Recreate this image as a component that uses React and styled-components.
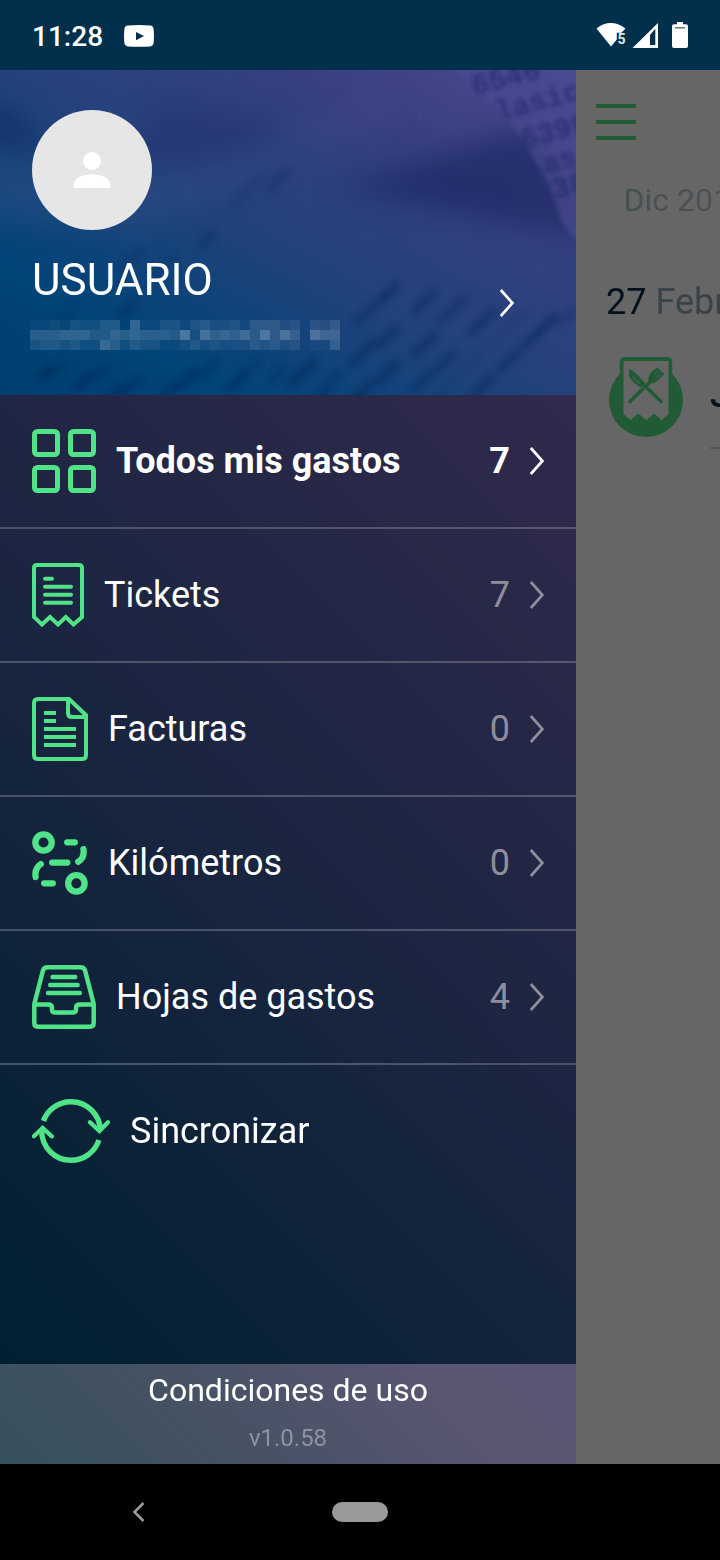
import React from "react";
import styled, { createGlobalStyle } from "styled-components";

const GREEN = "#50e387";
const DIM_GREEN = "#205b36";

const GlobalStyle = createGlobalStyle`
  * { box-sizing: border-box; }
  body { margin: 0; background: #000; font-family: Roboto, "Liberation Sans", sans-serif; }
  svg { display: block; flex: none; }
`;

const Screen = styled.div`
  width: 720px;
  height: 1560px;
  display: flex;
  flex-direction: column;
  overflow: hidden;
`;

const StatusBar = styled.header`
  height: 70px;
  flex: none;
  display: flex;
  align-items: center;
  padding: 2px 32px 0;
  background: #00304b;
  color: #fff;
`;

const Clock = styled.span`
  font-size: 28px;
  font-weight: 500;
  line-height: 34px;
  width: 92px;
  padding-top: 1px;
`;

const StatusIcons = styled.div`
  margin-left: auto;
  display: flex;
`;

const Body = styled.div`
  height: 1394px;
  flex: none;
  display: flex;
`;

const Drawer = styled.aside`
  width: 576px;
  flex: none;
  display: flex;
  flex-direction: column;
`;

const Profile = styled.section`
  height: 325px;
  flex: none;
  display: grid;
  background: linear-gradient(to top right, #003e70 0%, #004478 20%, #23427c 48%, #38407f 75%, #4c4a91 100%);
  overflow: hidden;
  > * { grid-area: 1 / 1; }
`;

const ProfileContent = styled.div`
  z-index: 1;
  display: flex;
  justify-content: space-between;
  padding: 40px 62px 0 32px;
`;

const ProfileArrow = styled.div`
  padding-top: 179px;
`;

const Avatar = styled.div`
  width: 120px;
  height: 120px;
  border-radius: 50%;
  background: #e6e6e6;
  display: flex;
  align-items: center;
  justify-content: center;
`;

const UserName = styled.div`
  margin-top: 23px;
  height: 51px;
  line-height: 54px;
  font-size: 44px;
  color: #fff;
`;

const Redacted = styled.div`
  margin: 16px 0 0 -2px;
  width: 310px;
  display: grid;
  grid-template-columns: repeat(31, 10px);
  grid-auto-rows: 10px;
`;

const Pixel = styled.i`
  background: rgba(190, 205, 225, ${(p) => p.$level * 0.041});
`;

const Menu = styled.nav`
  flex: 1;
  background: linear-gradient(45deg, #012031 0%, #1a2540 50%, #312a4c 100%);
`;

const MenuRow = styled.div`
  height: 134px;
  display: flex;
  align-items: center;
  gap: 20px;
  padding: 0 32px;
  border-bottom: 2px solid ${(p) => (p.$last ? "transparent" : "rgba(255,255,255,0.22)")};
  font-size: 36px;
  font-weight: ${(p) => (p.$active ? 700 : 400)};
  color: #fff;
`;

const Label = styled.span`
  flex: 1;
  white-space: nowrap;
`;

const Count = styled.span`
  color: ${(p) => (p.$active ? "#fff" : "#8f8e9c")};
`;

const Footer = styled.footer`
  height: 100px;
  flex: none;
  display: flex;
  flex-direction: column;
  align-items: center;
  background: linear-gradient(45deg, #36505c 0%, #475265 40%, #5a5672 76%, #5b5673 100%);
`;

const Terms = styled.div`
  margin-top: 6px;
  font-size: 32px;
  line-height: 40px;
  color: #fff;
`;

const Version = styled.div`
  margin-top: 13px;
  font-size: 24px;
  line-height: 30px;
  color: #8d93a0;
`;

const Page = styled.main`
  flex: 1;
  min-width: 0;
  overflow: hidden;
  background: #666;
  white-space: nowrap;
`;

const Hamburger = styled.div`
  margin: 34px 0 0 20px;
  width: 40px;
  display: grid;
  gap: 12px;
`;

const Bar = styled.span`
  height: 4px;
  background: ${DIM_GREEN};
`;

const Month = styled.div`
  margin: 41px 0 0 47.5px;
  font-size: 32px;
  line-height: 38px;
  color: #495155;
`;

const DateLine = styled.div`
  margin: 61px 0 0 30px;
  font-size: 36px;
  line-height: 44px;
  color: #38444a;
  b { font-weight: 400; color: #00131d; }
`;

const Expense = styled.div`
  display: flex;
  gap: 27px;
  padding: 33px 0 0 33px;
`;

const ExpenseText = styled.div`
  width: 300px;
  flex: none;
  height: 92px;
  padding-top: 16px;
  border-bottom: 2px solid #555;
  font-size: 36px;
  line-height: 44px;
  font-weight: 500;
  color: #00131d;
`;

const NavBar = styled.footer`
  height: 96px;
  flex: none;
  display: grid;
  grid-template-columns: 132px 200px 56px;
  align-items: center;
  background: #000;
`;

const BackSlot = styled.div`
  grid-column: 2;
`;

const HomePill = styled.div`
  height: 20px;
  border-radius: 10px;
  background: #999;
`;

const Chevron = ({ color = "#fff" }) => (
  <svg width="14" height="28" viewBox="0 0 14 28" fill="none" stroke={color} strokeWidth="2.7">
    <path d="M.8 1 12.4 14 .8 27" />
  </svg>
);

const GridIcon = () => (
  <svg width="64" height="64" fill="none" stroke={GREEN} strokeWidth="5">
    {[2.5, 38.5].map((y) =>
      [2.5, 38.5].map((x) => <rect key={`${x}-${y}`} x={x} y={y} width="23" height="23" rx="3" />)
    )}
  </svg>
);

const TicketIcon = () => (
  <svg width="52" height="64" fill="none" stroke={GREEN} strokeWidth="4">
    <path d="M2 54V5Q2 2 5 2H47Q50 2 50 5V54L41.5 61.5 33.8 54 26 61.5 18 54 10 61.5Z" strokeLinejoin="miter" />
    <path d="M13 15.7H20M13 23.7H39M13 31.7H39M13 39.7H39" strokeLinecap="round" />
  </svg>
);

const InvoiceIcon = () => (
  <svg width="56" height="64" fill="none" stroke={GREEN} strokeWidth="4">
    <path d="M37 2H6Q2 2 2 6V58Q2 62 6 62H50Q54 62 54 58V18.2Z" />
    <path d="M36 2V16Q36 20 40 20H54M12 16H24M12 24H24M12 32H44M12 40H44M12 48H44" />
  </svg>
);

const RouteIcon = () => (
  <svg width="56" height="64" fill="none" stroke={GREEN} strokeWidth="6.3" strokeLinecap="round">
    <circle cx="11.5" cy="11.5" r="8.2" />
    <circle cx="44.4" cy="52.4" r="8.2" />
    <path d="M35.2 11.3H42.8M20.2 31.6H35.3M12.2 52.3H20.8" />
    <path d="M51.4 18C52.4 24 50.8 28 46.2 30.7M8.8 33C4 36.4 2.8 40.6 3.6 46" />
  </svg>
);

const TrayIcon = () => (
  <svg width="64" height="64" fill="none" stroke={GREEN} strokeWidth="4.5">
    <path d="M2.3 39 10.8 6Q11.8 2.3 15.6 2.3H48.4Q52.2 2.3 53.2 6L61.7 39V58Q61.7 61.7 58 61.7H6Q2.3 61.7 2.3 58Z" />
    <path d="M2.3 39.4H16.5Q20 39.4 20 43V44.5Q20 47.6 23.5 47.6H40.5Q44 47.6 44 44.5V43Q44 39.4 47.5 39.4H61.7" />
    <path d="M20.6 12H43.2M18.2 20H45.6M16 28H47.8" strokeLinecap="round" />
  </svg>
);

const SyncIcon = () => (
  <svg width="78" height="64" fill="none" stroke={GREEN} strokeWidth="5.4">
    <path d="M11.4 22A29.3 29.3 0 0 1 39 2.7 29.3 29.3 0 0 1 68.3 32M66.9 41A29.3 29.3 0 0 1 39 61.3 29.3 29.3 0 0 1 9.7 32" />
    <path d="M58 23.2 67.4 32 76 23.2M1.9 37.3 10.6 29 19.8 37.3" strokeWidth="4.3" strokeLinecap="round" />
  </svg>
);

const PersonIcon = () => (
  <svg width="36" height="38" fill="#fff">
    <circle cx="18" cy="10" r="9" />
    <path d="M0 37V31.5C1 26 10 23.5 18 23.5S35 26 36 31.5V37Z" />
  </svg>
);

const VideoIcon = () => (
  <svg width="30" height="22" viewBox="0 0 30 22">
    <path d="M4 .6Q15-.5 26 .6 29.3 1 29.6 4 30.3 11 29.6 18 29.3 21 26 21.4 15 22.3 4 21.4.7 21 .4 18-.3 11 .4 4 .7 1 4 .6Z" fill="#fff" />
    <path d="M12 7 20 11 12 15.2Z" fill="#00304b" />
  </svg>
);

const SignalIcons = () => (
  <svg width="92" height="28" fill="#fff">
    <path d="M.5 6.4Q14.5-4.4 29.5 6.4L25.4 10.8H20.8V17.6L15 24.6Z" />
    <text x="21.6" y="22.3" fontSize="14" fontWeight="700" fill="#dfe6ea">5</text>
    <path d="M62 1V26H36.5ZM59.3 6.8 54 13V23H59.3Z" fillRule="evenodd" />
    <path d="M81 0H87V2.2H90Q92 2.2 92 4V24Q92 26 90 26H78Q76 26 76 24V4Q76 2.2 78 2.2H81Z" />
    <path d="M79 5H89V6.6H79Z" fill="#00304b" opacity=".6" />
  </svg>
);

const MealBadge = () => (
  <svg width="74" height="82" fill="none" stroke={DIM_GREEN}>
    <circle cx="37" cy="43" r="37" fill={DIM_GREEN} stroke="none" />
    <path d="M12.8 58V5Q12.8 2 15.8 2H58.2Q61.2 2 61.2 5V58" strokeWidth="4" />
    <path d="M14.5 4H59.5V57L52.5 63.3 46.8 57.8Q45 56 43.2 57.8L37.3 63.3 31 57.8Q29 56 27.2 57.8L21.5 63.3 14.5 57Z" fill="#666" stroke="none" />
    <path d="M21 44.5 40 26M52 44.5 34 27" strokeWidth="3.6" strokeLinecap="round" />
    <path d="M21.3 13.2Q25 15.5 34.6 26L31.5 29.2Q21 22.5 20.6 17.5Z" fill={DIM_GREEN} strokeWidth="2" strokeLinejoin="round" />
    <path d="M23.4 19Q27 24 30.6 26.4" stroke="#666" strokeWidth="1" />
    <path d="M40 26Q39 19.5 42.5 15.5L48 11 51 14 54 17 49 22.5Q46 26.5 40 26Z" fill={DIM_GREEN} strokeWidth="1" />
    <path d="M44 17 48.3 11.8M47 20 51.2 14.6M48 22 53.8 16.8" strokeWidth="2.6" strokeLinecap="round" />
    <path d="M45.4 18.2 49.6 13.8M47.9 20.5 52 16.6" stroke="#666" strokeWidth=".7" />
  </svg>
);

/* Smudges of print on the paper: x, y, length, opacity. */
const INK = [
  [130, 190, 28, 0.2], [207, 170, 16, 0.4], [250, 118, 40, 0.2], [278, 110, 22, 0.3],
  [128, 239, 18, 0.45], [65, 245, 24, 0.2], [165, 195, 24, 0.2],
  [46, 303, 14, 0.55], [60, 298, 8, 0.3], [84, 311, 18, 0.6], [100, 303, 14, 0.4],
  [112, 325, 18, 0.5], [130, 316, 20, 0.5], [168, 322, 20, 0.5], [188, 309, 22, 0.55],
  [208, 299, 18, 0.4], [237, 311, 20, 0.55], [252, 297, 14, 0.3], [278, 304, 16, 0.35],
  [303, 302, 30, 0.6], [333, 310, 16, 0.35], [362, 322, 26, 0.6], [322, 324, 14, 0.4],
  [372, 238, 38, 0.45], [391, 221, 16, 0.55], [363, 283, 30, 0.5], [388, 267, 22, 0.5],
  [388, 302, 26, 0.6], [424, 232, 26, 0.5], [424, 275, 26, 0.6], [452, 240, 32, 0.4],
  [422, 312, 24, 0.45], [446, 291, 22, 0.5], [482, 252, 30, 0.55],
  [484, 315, 24, 0.6], [510, 290, 24, 0.55], [540, 261, 40, 0.6], [567, 247, 14, 0.3],
];

const PaperTexture = () => (
  <svg width="576" height="325" viewBox="0 0 576 325">
    <defs>
      <filter id="wide" x="-30%" y="-50%" width="160%" height="200%" colorInterpolationFilters="sRGB"><feGaussianBlur stdDeviation="14" /></filter>
      <filter id="ink" x="-20%" y="-20%" width="140%" height="140%" colorInterpolationFilters="sRGB"><feGaussianBlur stdDeviation="3.6" /></filter>
      <filter id="print" x="-20%" y="-20%" width="140%" height="140%" colorInterpolationFilters="sRGB"><feGaussianBlur stdDeviation="2.2" /></filter>
    </defs>
    <g filter="url(#wide)">
      <path d="M-30 25 20 45 45 80-30 70Z" fill="#122c64" opacity=".7" />
      <path d="M120 90 165 30 290 50 240 85 180 100Z" fill="#232e6d" opacity=".45" />
      <path d="M-20 90 150 110 270 85 330 65 140 160-20 150Z" fill="#3a5590" opacity=".3" />
      <path d="M335 118 460 80 530 55 590 165 490 150Z" fill="#17245f" opacity=".6" />
      <path d="M325 65 395 35 385 20 290 70Z" fill="#5450a0" opacity=".35" />
      <path d="M400 160 480 170 590 185 590 220 450 200Z" fill="#33407f" opacity=".4" />
    </g>
    <path d="M448-4C480 20 503 42 519 66 543 98 555 126 561 150Q565 160 580 172V-4Z" fill="#4a4b93" opacity=".65" filter="url(#print)" />
    <g filter="url(#ink)" stroke="#042557" strokeWidth="8" strokeLinecap="round" opacity=".85">
      {INK.map(([x, y, len, o]) => (
        <path key={`${x}-${y}`} d={`M${x - len * 0.36} ${y + len * 0.34}L${x + len * 0.36} ${y - len * 0.34}`} opacity={o} />
      ))}
      <path d="M438 325 525 243" strokeWidth="1.5" opacity=".5" />
    </g>
    <g filter="url(#print)" fill="#222a6c" fontFamily="Liberation Mono" fontWeight="700" fontSize="29" opacity=".72">
      <text transform="translate(474 25) rotate(-14)">6546</text>
      <text transform="translate(498 51) rotate(-15)">lasic</text>
      <text transform="translate(523 79) rotate(-15)">6399</text>
      <text transform="translate(545 104) rotate(-15)">as</text>
      <text transform="translate(555 129) rotate(-15)">38</text>
    </g>
  </svg>
);

const REDACTED_ROWS = [
  "1121322440611331342231444230324",
  "5556664465655549285657494850866",
  "3443422752433112423222434230115",
];

const MENU = [
  { label: "Todos mis gastos", count: 7, Icon: GridIcon, active: true },
  { label: "Tickets", count: 7, Icon: TicketIcon },
  { label: "Facturas", count: 0, Icon: InvoiceIcon },
  { label: "Kilómetros", count: 0, Icon: RouteIcon },
  { label: "Hojas de gastos", count: 4, Icon: TrayIcon },
  { label: "Sincronizar", Icon: SyncIcon, last: true },
];

export default function App() {
  return (
    <Screen>
      <GlobalStyle />
      <StatusBar>
        <Clock>11:28</Clock>
        <VideoIcon />
        <StatusIcons><SignalIcons /></StatusIcons>
      </StatusBar>
      <Body>
        <Drawer>
          <Profile>
            <PaperTexture />
            <ProfileContent>
              <div>
                <Avatar><PersonIcon /></Avatar>
                <UserName>USUARIO</UserName>
                <Redacted>
                  {REDACTED_ROWS.join("").split("").map((level, i) => <Pixel key={i} $level={Number(level)} />)}
                </Redacted>
              </div>
              <ProfileArrow><Chevron /></ProfileArrow>
            </ProfileContent>
          </Profile>
          <Menu>
            {MENU.map(({ label, count, Icon, active, last }) => (
              <MenuRow key={label} $active={active} $last={last}>
                <Icon />
                <Label>{label}</Label>
                {count !== undefined && <Count $active={active}>{count}</Count>}
                {count !== undefined && <Chevron color={active ? "#fff" : "#8f8e9c"} />}
              </MenuRow>
            ))}
          </Menu>
          <Footer>
            <Terms>Condiciones de uso</Terms>
            <Version>v1.0.58</Version>
          </Footer>
        </Drawer>
        <Page>
          <Hamburger><Bar /><Bar /><Bar /></Hamburger>
          <Month>Dic 2019</Month>
          <DateLine><b>27</b> Febrero</DateLine>
          <Expense>
            <MealBadge />
            <ExpenseText>J</ExpenseText>
          </Expense>
        </Page>
      </Body>
      <NavBar>
        <BackSlot>
          <svg width="13" height="20" fill="none" stroke="#999" strokeWidth="2.6">
            <path d="M11.5 1 2.5 10 11.5 19" />
          </svg>
        </BackSlot>
        <HomePill />
      </NavBar>
    </Screen>
  );
}
